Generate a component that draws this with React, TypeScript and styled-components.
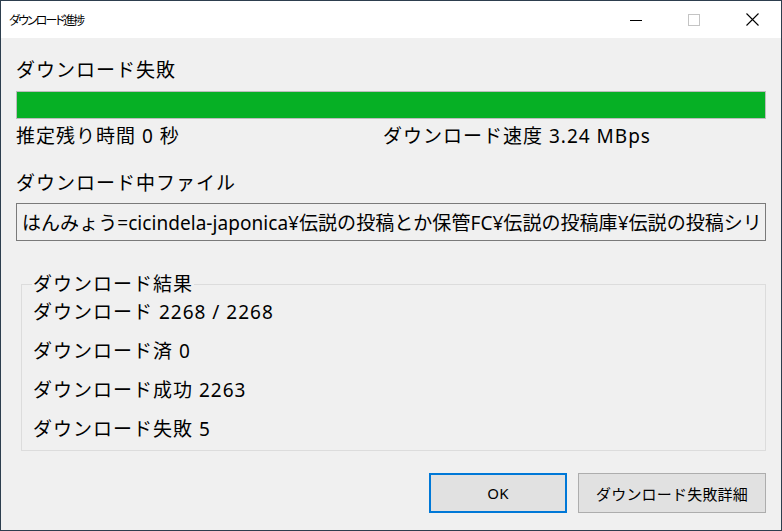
import React from "react";
import styled, { createGlobalStyle } from "styled-components";

const GlobalStyle = createGlobalStyle`
  html, body {
    margin: 0;
    padding: 0;
    background: #2d3e4e;
  }
  * {
    box-sizing: border-box;
  }
`;

const Window = styled.div`
  width: 782px;
  height: 531px;
  border: 1px solid #2d3e4e;
  background: #f0f0f0;
  display: flex;
  flex-direction: column;
  font-family: "Noto Sans", "Noto Sans CJK JP", sans-serif;
  color: #000;
`;

const TitleBar = styled.div`
  height: 37px;
  background: #fff;
  display: flex;
  align-items: center;
  flex-shrink: 0;
`;

const Title = styled.div`
  flex: 1;
  padding-left: 8px;
  font-size: 12px;
  font-family: "Noto Sans CJK JP", sans-serif;
  font-feature-settings: "palt";
  letter-spacing: -1.9px;
`;

const CaptionButton = styled.div`
  width: 58px;
  height: 37px;
  display: flex;
  align-items: center;
  justify-content: center;
`;

const Content = styled.div`
  flex: 1;
  display: flex;
  flex-direction: column;
  padding: 0 15px 0 15px;
  font-size: 19px;
  letter-spacing: 1px;
`;

const Label = styled.div<{ $top: number }>`
  margin-top: ${(p) => p.$top}px;
  line-height: 22px;
  height: 22px;
  white-space: nowrap;
`;

const Progress = styled.div`
  margin-top: 10px;
  height: 28px;
  border: 1px solid #bcbcbc;
  background: #e6e6e6;
`;

const ProgressFill = styled.div`
  height: 100%;
  background: #06b025;
`;

const StatsRow = styled.div`
  margin-top: 6px;
  display: grid;
  grid-template-columns: 367px 1fr;
  line-height: 22px;
  white-space: nowrap;
`;

const FileBox = styled.div`
  margin-top: 9px;
  height: 38px;
  border: 1px solid #7a7a7a;
  background: #f0f0f0;
  padding: 0 5px;
  display: flex;
  align-items: center;
  overflow: hidden;
  white-space: nowrap;
  letter-spacing: 0.05px;
`;

const Group = styled.fieldset`
  margin: 32px 0 0 5px;
  padding: 6px 10px 10px 11px;
  border: 1px solid #dcdcdc;
  display: flex;
  flex-direction: column;
  gap: 17px;
  min-width: 0;
`;

const Legend = styled.legend`
  padding: 0 1px;
  margin-left: -1px;
  line-height: 22px;
`;

const Row = styled.div`
  line-height: 22px;
  height: 22px;
  white-space: nowrap;
`;

const ButtonRow = styled.div`
  margin-top: 22px;
  display: flex;
  justify-content: flex-end;
  gap: 11px;
`;

const Button = styled.button<{ $primary?: boolean; $w: number }>`
  width: ${(p) => p.$w}px;
  height: 40px;
  font-family: "Noto Sans", "Noto Sans CJK JP", sans-serif;
  font-size: 15px;
  letter-spacing: 0.2px;
  color: #000;
  background: #e1e1e1;
  border: ${(p) => (p.$primary ? "2px solid #0078d7" : "1px solid #adadad")};
  padding: 0;
`;

export default function App() {
  return (
    <>
      <GlobalStyle />
      <Window>
        <TitleBar>
          <Title>ダウンロード進捗</Title>
          <CaptionButton>
            <svg width="12" height="12" viewBox="0 0 12 12">
              <line x1="0" y1="6.5" x2="12" y2="6.5" stroke="#000" strokeWidth="1" />
            </svg>
          </CaptionButton>
          <CaptionButton>
            <svg width="12" height="12" viewBox="0 0 12 12">
              <rect x="0.5" y="0.5" width="11" height="11" fill="none" stroke="#c4c4c4" strokeWidth="1" />
            </svg>
          </CaptionButton>
          <CaptionButton>
            <svg width="13" height="13" viewBox="0 0 13 13">
              <path d="M0.5 0.5 L12.5 12.5 M12.5 0.5 L0.5 12.5" stroke="#000" strokeWidth="1.1" fill="none" />
            </svg>
          </CaptionButton>
        </TitleBar>
        <Content>
          <Label $top={21}>ダウンロード失敗</Label>
          <Progress>
            <ProgressFill style={{ width: "100%" }} />
          </Progress>
          <StatsRow>
            <span>推定残り時間 0 秒</span>
            <span>ダウンロード速度 3.24 MBps</span>
          </StatsRow>
          <Label $top={25}>ダウンロード中ファイル</Label>
          <FileBox>
            はんみょう=cicindela-japonica¥伝説の投稿とか保管FC¥伝説の投稿庫¥伝説の投稿シリ
          </FileBox>
          <Group>
            <Legend>ダウンロード結果</Legend>
            <Row>ダウンロード 2268 / 2268</Row>
            <Row>ダウンロード済 0</Row>
            <Row>ダウンロード成功 2263</Row>
            <Row>ダウンロード失敗 5</Row>
          </Group>
          <ButtonRow>
            <Button $primary $w={138}>OK</Button>
            <Button $w={188}>ダウンロード失敗詳細</Button>
          </ButtonRow>
        </Content>
      </Window>
    </>
  );
}
